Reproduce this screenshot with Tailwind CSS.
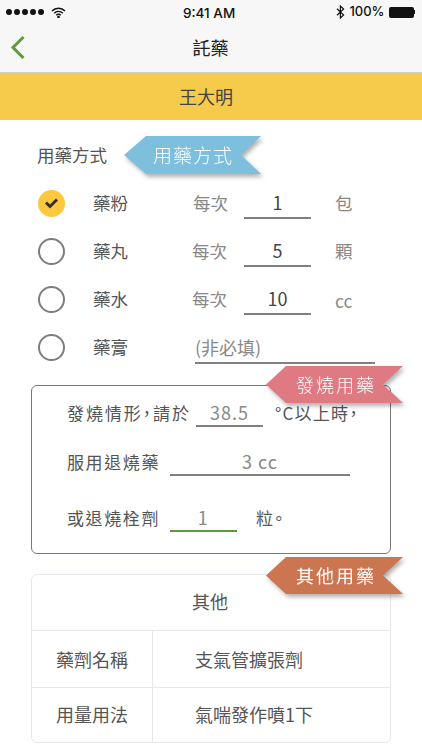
<!DOCTYPE html>
<html lang="zh-Hant">
<head>
<meta charset="UTF-8">
<meta name="viewport" content="width=device-width, initial-scale=1.0">
<script src="https://cdn.jsdelivr.net/npm/@tailwindcss/browser@4"></script>
<title>托藥</title>
</head>
<body class="bg-white">
<div class="relative w-[422px] h-[750px] overflow-hidden font-['Noto_Sans_CJK_TC','Noto_Sans',sans-serif] text-[#555]">

  <!-- status bar -->
  <div class="relative flex items-center justify-between h-[24px] bg-[#f7f7f7] pl-[6px] pr-[7px] text-[#111] font-['Inter',sans-serif] text-[13px] font-medium">
    <div class="flex items-center gap-[2px]">
      <span class="w-[6px] h-[6px] rounded-full bg-[#111]"></span>
      <span class="w-[6px] h-[6px] rounded-full bg-[#111]"></span>
      <span class="w-[6px] h-[6px] rounded-full bg-[#111]"></span>
      <span class="w-[6px] h-[6px] rounded-full bg-[#111]"></span>
      <span class="w-[6px] h-[6px] rounded-full bg-[#111]"></span>
      <svg class="ml-[5px]" width="15" height="11" viewBox="0 0 15 11" fill="none" stroke="#111" stroke-width="1.4"><path d="M1 4a9 9 0 0 1 13 0"/><path d="M3.2 6.2a6 6 0 0 1 8.6 0"/><path d="M5.3 8.2a3 3 0 0 1 4.4 0"/><circle cx="7.5" cy="10" r="0.6" fill="#111"/></svg>
    </div>
    <span class="absolute left-[183px] top-[3px] text-[13.500px]">9:41 AM</span>
    <div class="flex items-center gap-[4px]">
      <svg width="9" height="14" viewBox="0 0 9 14" fill="none" stroke="#111" stroke-width="1.2"><path d="M1 3.8 7.6 10 4.4 13V1l3.2 3L1 10.200"/></svg>
      <span>100%</span>
      <span class="flex items-center">
        <span class="w-[25px] h-[11px] bg-[#111] rounded-[2px]"></span>
        <span class="w-[1.500px] h-[4px] bg-[#111]"></span>
      </span>
    </div>
  </div>

  <!-- nav -->
  <div class="relative flex items-center justify-center h-[49px] pb-[1px] bg-[#f7f7f7] border-b border-[#cfcdc8] text-[#222] text-[18px]">
    <svg class="absolute left-[10px] top-[11px]" width="16" height="25" viewBox="0 0 16 25" fill="none" stroke="#5c9a3c" stroke-width="3"><path d="M13.500 2 3 12.500 13.500 23"/></svg>
    <span class="-ml-[1px]">託藥</span>
  </div>

  <!-- patient -->
  <div class="flex items-center justify-center h-[47px] bg-[#f6ca4b] text-[#444] text-[18px] pr-[10px]">王大明</div>

  <!-- medication type -->
  <div class="flex items-center h-[38px] mt-[16px] pl-[37px] text-[17.500px]">
    <span class="w-[87px]">用藥方式</span>
    <div class="[filter:drop-shadow(2px_3px_2px_rgba(0,0,0,0.3))]">
      <div class="flex items-center w-[137px] h-[38px] pl-[29px] bg-[#7dbfdd] text-white text-[19px] font-light tracking-[1px] [clip-path:polygon(22px_0,100%_0,117px_50%,100%_100%,22px_100%,0_50%)]">用藥方式</div>
    </div>
  </div>

  <div class="pl-[38px] mt-[5px] text-[17.500px]">
    <div class="flex items-center h-[48px]">
      <span class="flex items-center justify-center w-[27px] h-[27px] rounded-full bg-[#fbc83f]">
        <svg width="15" height="12" viewBox="0 0 15 12" fill="none" stroke="#333" stroke-width="3"><path d="M2 5.500 6 9.500 13 2.500"/></svg>
      </span>
      <span class="ml-[28px] w-[100px]">藥粉</span>
      <span class="w-[51px] text-[#888]">每次</span>
      <span class="flex items-center justify-center w-[67px] h-[30px] mt-[1px] border-b-2 border-[#808080] text-[18px] text-[#444]">1</span>
      <span class="ml-[24px] text-[#888]">包</span>
    </div>
    <div class="flex items-center h-[48px]">
      <span class="w-[27px] h-[27px] rounded-full border-[2.500px] border-[#7d7d7d]"></span>
      <span class="ml-[28px] w-[99px]">藥丸</span>
      <span class="w-[52px] text-[#888]">每次</span>
      <span class="flex items-center justify-center w-[67px] h-[30px] mt-[1px] border-b-2 border-[#808080] text-[18px] text-[#444]">5</span>
      <span class="ml-[24px] text-[#888]">顆</span>
    </div>
    <div class="flex items-center h-[48px]">
      <span class="w-[27px] h-[27px] rounded-full border-[2.500px] border-[#7d7d7d]"></span>
      <span class="ml-[28px] w-[99px]">藥水</span>
      <span class="w-[52px] text-[#888]">每次</span>
      <span class="flex items-center justify-center w-[67px] h-[30px] mt-[1px] border-b-2 border-[#808080] text-[18px] text-[#444]">10</span>
      <span class="ml-[24px] mt-[4px] text-[#888]">cc</span>
    </div>
    <div class="flex items-center h-[48px]">
      <span class="w-[27px] h-[27px] rounded-full border-[2.500px] border-[#7d7d7d]"></span>
      <span class="ml-[28px] w-[102px]">藥膏</span>
      <span class="flex items-center w-[180px] h-[32px] mt-[2px] border-b-2 border-[#808080] text-[#888] text-[18px]">(非必填)</span>
    </div>
  </div>

  <!-- fever -->
  <div class="relative mt-[14px] mx-[31px] h-[169px] rounded-[6px] border border-[#777] pl-[35px] text-[17px] tracking-[1.600px]">
    <div class="flex items-center h-[30px] mt-[12px]">
      <span class="w-[129px] whitespace-nowrap tracking-[1.900px]">發燒情形<span class="[font-feature-settings:'palt']">&#xFF0C;</span>請於</span>
      <span class="flex items-center justify-center w-[67px] h-[28px] border-b-2 border-[#808080] text-[#888] text-[18px] tracking-[1px]">38.5</span>
      <span class="ml-[12px] whitespace-nowrap tracking-[1.200px]">°C以上時<span class="[font-feature-settings:'palt']">&#xFF0C;</span></span>
    </div>
    <div class="flex items-center h-[30px] mt-[19px]">
      <span class="w-[103px]">服用退燒藥</span>
      <span class="flex items-center justify-center w-[180px] h-[28px] border-b-2 border-[#808080] text-[#888] text-[18px] tracking-[1px]">3 cc</span>
    </div>
    <div class="flex items-center h-[30px] mt-[26px]">
      <span class="w-[103px]">或退燒栓劑</span>
      <span class="flex items-center justify-center w-[67px] h-[28px] border-b-2 border-[#5c9a3c] text-[#888] text-[18px]">1</span>
      <span class="ml-[19px]">粒<span class="[font-feature-settings:'palt']">。</span></span>
    </div>
    <div class="absolute left-[234px] top-[-20px] [filter:drop-shadow(2px_3px_2px_rgba(0,0,0,0.3))]">
      <div class="flex items-center w-[137px] h-[37px] pl-[30px] bg-[#df7a83] text-white text-[18px] font-light tracking-[2px] [clip-path:polygon(20px_0,100%_0,117px_50%,100%_100%,20px_100%,0_50%)]">發燒用藥</div>
    </div>
  </div>

  <!-- others -->
  <div class="relative mt-[20px] mx-[31px] h-[169px] rounded-[6px] border border-[#e6e8ee] text-[18px]">
    <div class="flex items-center justify-center h-[56px] pb-[3px] pr-[2px] border-b border-[#e6e8ee]">其他</div>
    <div class="flex h-[57px] border-b border-[#e6e8ee]">
      <span class="flex items-center justify-center w-[121px] border-r border-[#e6e8ee]">藥劑名稱</span>
      <span class="flex items-center pl-[42px]">支氣管擴張劑</span>
    </div>
    <div class="flex h-[54px]">
      <span class="flex items-center justify-center w-[121px] pb-[1px] border-r border-[#e6e8ee]">用量用法</span>
      <span class="flex items-center pl-[42px] pb-[1px]">氣喘發作噴1下</span>
    </div>
    <div class="absolute left-[234px] top-[-18px] [filter:drop-shadow(2px_3px_2px_rgba(0,0,0,0.3))]">
      <div class="flex items-center w-[137px] h-[37px] pl-[30px] bg-[#cc7551] text-white text-[18px] tracking-[2px] [clip-path:polygon(20px_0,100%_0,117px_50%,100%_100%,20px_100%,0_50%)]">其他用藥</div>
    </div>
  </div>
</div>
</body>
</html>
